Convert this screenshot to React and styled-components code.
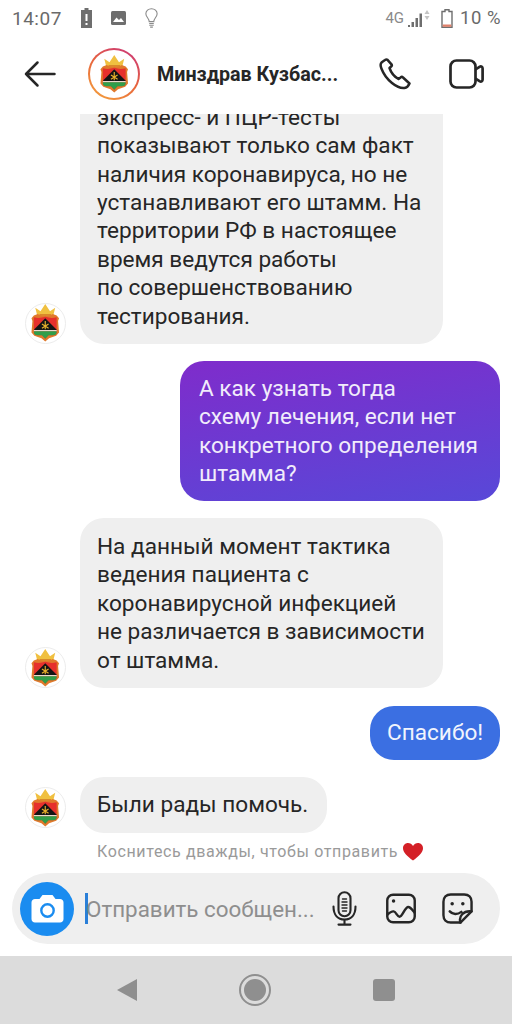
import React from 'react'
import styled, { createGlobalStyle } from 'styled-components'

const GlobalStyle = createGlobalStyle`
    html, body { margin: 0; padding: 0; background: #fff; }
    body { font-family: Roboto, "Noto Sans", sans-serif; }
`

function Crest({ height }) {
    return (
        <svg width={height * 0.75} height={height} viewBox="0 0 30 40">
            <path d="M7 14 L4.5 4 L10 7.5 L15 0 L20 7.5 L25.5 4 L23 14 Z" fill="#f0c040" />
            <path d="M9 10.5 H21 V12.5 H9 Z" fill="#d98a2a" />
            <path d="M3 12 L7 10.5 Q11 13 15 12 Q19 13 23 10.5 L27 12 L29.5 15 L28.5 18 L29.5 30 L26.5 33.5 L22 35 L19 36 L15 39.5 L11 36 L8 35 L3.5 33.5 L0.5 30 L1.5 18 L0.5 15 Z" fill="#e07a2c" />
            <path d="M3 14 Q9 15.5 15 13.5 Q21 15.5 27 14 L27 29.5 Q27 33 23 33 L18.5 33 L15 36.5 L11.5 33 L7 33 Q3 33 3 29.5 Z" fill="#e6302c" />
            <path d="M3.5 26.5 L15 15 L26.5 26.5 L26.5 27.5 L3.5 27.5 Z" fill="#141414" />
            <path d="M3 27.5 H27 V28.8 H3 Z" fill="#f4f4ea" />
            <path d="M3 28.8 H27 V29.5 Q27 33 23 33 L18.5 33 L15 36.5 L11.5 33 L7 33 Q3 33 3 29.5 Z" fill="#2f9e4a" />
            <path d="M15 18 V26.5 M11.5 21 L18.5 25.5 M18.5 21 L11.5 25.5" stroke="#e6b02c" strokeWidth="1.2" fill="none" />
        </svg>
    )
}

const Back = () => (
    <svg width="32" height="28" viewBox="0 0 32 28" fill="none" stroke="#262626" strokeWidth="2.5" strokeLinecap="round" strokeLinejoin="round">
        <path d="M2 14 H30.5 M13.5 2.5 L2 14 L13.5 25.5" />
    </svg>
)

const Phone = () => (
    <svg width="33" height="33" viewBox="0 0 33 33" fill="none" stroke="#262626" strokeWidth="2.5" strokeLinejoin="round">
        <path d="M6 2 L2.8 4.2 C1.2 5.6 1.4 8 2.4 10.5 C4.5 16 8 21 13 25 C17 28.2 22 30.5 25.5 30 C27.5 29.7 29.5 27.8 30.5 25.5 L24 19.5 C23.3 18.7 22.4 18.7 21.6 19.4 L19.5 21 C15 18.5 12 14.5 10.5 10 L12.4 8.3 C13 7.7 13 7 12.5 6.3 L8.5 1.8 C7.7 1.2 6.8 1.4 6 2 Z" />
    </svg>
)

const Video = () => (
    <svg width="35" height="30" viewBox="0 0 35 30" fill="none" stroke="#262626" strokeWidth="2.7" strokeLinejoin="round">
        <rect x="1.5" y="1.5" width="25" height="27" rx="6" />
        <path d="M26.5 10.5 L30.5 7.8 C32.2 6.8 33.6 7.7 33.6 9.5 V20.5 C33.6 22.3 32.2 23.2 30.5 22.2 L26.5 19.5" />
    </svg>
)

const Mic = () => (
    <svg width="25" height="35" viewBox="0 0 25 35" fill="none" stroke="#262626" strokeWidth="2.1" strokeLinecap="round">
        <rect x="6.5" y="1.2" width="12" height="24" rx="6" />
        <path d="M1.5 15.5 C1.5 24 6 28.5 12.5 28.5 C19 28.5 23.5 24 23.5 15.5 M12.5 28.5 V33 M6.5 33.6 H18.5" />
        <path d="M10.5 8 H14.5 M10 11 H15 M10 14 H15 M10 17 H15 M10.5 20 H14.5" strokeWidth="1.4" />
    </svg>
)

const Gallery = () => (
    <svg width="30" height="31" viewBox="0 0 31 31" fill="none" stroke="#262626" strokeWidth="2.5" strokeLinejoin="round">
        <rect x="1.3" y="1.3" width="28.4" height="28.4" rx="6" />
        <circle cx="7.8" cy="7.8" r="1.8" fill="#262626" stroke="none" />
        <path d="M1.3 22 C4 19.5 6 18 8 18.5 C10.5 19 11.5 24 14 24 C17 24 19.5 14 23 14 C25.5 14 27.5 17.5 29.7 20" />
    </svg>
)

const Sticker = () => (
    <svg width="31" height="31" viewBox="0 0 32 32" fill="none" stroke="#262626" strokeWidth="2.5" strokeLinejoin="round" strokeLinecap="round">
        <path d="M19 30.5 H9 C4.5 30.5 1.5 27.5 1.5 23 V9 C1.5 4.5 4.5 1.5 9 1.5 H23 C27.5 1.5 30.5 4.5 30.5 9 V19 Z" />
        <path d="M19 30.5 C17 24 22 18 30.5 19 M8 19 C11 22.5 16 22.5 20 19.5" />
        <circle cx="10.5" cy="11" r="1.8" fill="#262626" stroke="none" />
        <circle cx="21.5" cy="11" r="1.8" fill="#262626" stroke="none" />
    </svg>
)

const Camera = () => (
    <svg width="33" height="29" viewBox="0 0 33 29">
        <path d="M11.5 1 H21.5 L24.5 5 H29 C31 5 32.5 6.5 32.5 8.5 V25 C32.5 27 31 28.5 29 28.5 H4 C2 28.5 0.5 27 0.5 25 V8.5 C0.5 6.5 2 5 4 5 H8.5 Z" fill="#fff" />
        <circle cx="16.5" cy="16.5" r="6.2" fill="none" stroke="#1a8cf0" strokeWidth="2.4" />
    </svg>
)

const Alert = () => (
    <svg width="11" height="20" viewBox="0 0 11 20">
        <path d="M3.5 0 H7.5 V2 H11 V20 H0 V2 H3.5 Z" fill="#6e6e6e" />
        <path d="M4.5 6 H6.5 V13 H4.5 Z M4.5 15 H6.5 V17 H4.5 Z" fill="#fff" />
    </svg>
)

const Picture = () => (
    <svg width="15" height="14" viewBox="0 0 15 14">
        <rect width="15" height="14" rx="1.5" fill="#6e6e6e" />
        <path d="M2 11 L5.5 6.5 L8 9 L10 7 L13 11 Z" fill="#fff" />
    </svg>
)

const Bulb = () => (
    <svg width="13" height="20" viewBox="0 0 14 22" fill="none" stroke="#8a8a8a" strokeWidth="1.2">
        <path d="M4.5 15 C4.5 11.5 0.8 10 0.8 6.4 C0.8 3 3.6 0.8 7 0.8 C10.4 0.8 13.2 3 13.2 6.4 C13.2 10 9.5 11.5 9.5 15 Z" />
        <path d="M4.5 17 H9.5 M4.5 19 H9.5 M5.5 21 H8.5" />
    </svg>
)

const Signal = () => (
    <svg width="24" height="18" viewBox="0 0 24 18">
        <path d="M0 16 H2 V18 H0 Z M3.5 13 H6 V18 H3.5 Z M7.5 9 H10 V18 H7.5 Z M11.5 4.5 H14 V18 H11.5 Z" fill="#6e6e6e" />
        <path d="M19 1 L21.5 5 H16.5 Z M19 11 L16.5 7 H21.5 Z" fill="#c4c4c4" />
    </svg>
)

const BatteryIcon = () => (
    <svg width="12" height="19" viewBox="0 0 12 19">
        <path d="M4 0.7 H8 V2.5 H11 V18.3 H1 V2.5 H4 Z" fill="none" stroke="#6e6e6e" strokeWidth="1.4" />
        <rect x="1.7" y="15.5" width="8.6" height="2.3" fill="#e0806a" />
    </svg>
)

const Heart = () => (
    <svg width="20" height="18" viewBox="0 0 20 18">
        <path d="M10 17.5 C4 13 0 9.5 0 5.2 C0 2.2 2.3 0 5 0 C7 0 9 1 10 3 C11 1 13 0 15 0 C17.7 0 20 2.2 20 5.2 C20 9.5 16 13 10 17.5 Z" fill="#d42027" />
    </svg>
)

export default function App() {
    return (
        <Screen>
            <GlobalStyle />
            <StatusBar>
                <StatusGroup>
                    <Clock>14:07</Clock>
                    <Alert />
                    <Picture />
                    <Bulb />
                </StatusGroup>
                <StatusRight>
                    <Network>4G</Network>
                    <Signal />
                    <BatteryIcon />
                    <Percent>10 %</Percent>
                </StatusRight>
            </StatusBar>
            <Header>
                <BackSlot><Back /></BackSlot>
                <StoryRing>
                    <StoryInner><Crest height={38} /></StoryInner>
                </StoryRing>
                <Title>Минздрав Кузбас...</Title>
                <HeaderActions>
                    <Phone />
                    <Video />
                </HeaderActions>
            </Header>
            <Messages>
                <Row>
                    <Avatar><Crest height={38} /></Avatar>
                    <Bubble>
                        экспресс- и ПЦР-тесты<br />
                        показывают только сам факт<br />
                        наличия коронавируса, но не<br />
                        устанавливают его штамм. На<br />
                        территории РФ в настоящее<br />
                        время ведутся работы<br />
                        по совершенствованию<br />
                        тестирования.
                    </Bubble>
                </Row>
                <Row $mine>
                    <MineBubble>
                        А как узнать тогда<br />
                        схему лечения, если нет<br />
                        конкретного определения<br />
                        штамма?
                    </MineBubble>
                </Row>
                <Row $wide>
                    <Avatar><Crest height={38} /></Avatar>
                    <Bubble>
                        На данный момент тактика<br />
                        ведения пациента с<br />
                        коронавирусной инфекцией<br />
                        не различается в зависимости<br />
                        от штамма.
                    </Bubble>
                </Row>
                <Row $mine>
                    <ThanksBubble>Спасибо!</ThanksBubble>
                </Row>
                <Row $last>
                    <Avatar $lifted><Crest height={38} /></Avatar>
                    <ShortBubble>Были рады помочь.</ShortBubble>
                </Row>
                <Hint>
                    Коснитесь дважды, чтобы отправить
                    <Heart />
                </Hint>
            </Messages>
            <Composer>
                <CameraButton><Camera /></CameraButton>
                <Caret />
                <Placeholder>Отправить сообщен...</Placeholder>
                <ComposerActions>
                    <Mic />
                    <Gallery />
                    <Sticker />
                </ComposerActions>
            </Composer>
            <NavBar>
                <NavBack />
                <NavHome><NavDot /></NavHome>
                <NavSquare />
            </NavBar>
        </Screen>
    )
}

const Screen = styled.div`
    width: 512px;
    height: 1024px;
    display: flex;
    flex-direction: column;
    overflow: hidden;
    background: #fff;
`
const StatusBar = styled.div`
    height: 36px;
    flex-shrink: 0;
    display: flex;
    align-items: center;
    justify-content: space-between;
    padding: 0 11px 0 12px;
`
const StatusGroup = styled.div`
    display: flex;
    align-items: center;
    gap: 19px;
`
const StatusRight = styled.div`
    display: flex;
    align-items: center;
    gap: 6px;

    svg + svg {
        margin-left: 3px;
    }
`
const Clock = styled.span`
    font-size: 19px;
    letter-spacing: 0.5px;
    color: #6a6a6a;
`
const Network = styled.span`
    font-size: 15px;
    color: #8a8a8a;
    margin-right: -2px;
`
const Percent = styled.span`
    font-size: 18.5px;
    letter-spacing: 0.5px;
    color: #6a6a6a;
    margin-left: 1px;
`
const Header = styled.div`
    height: 78px;
    flex-shrink: 0;
    box-sizing: border-box;
    padding: 0 28px 2px 24px;
    display: flex;
    align-items: center;
`
const BackSlot = styled.div`
    display: flex;
    width: 64px;
`
const StoryRing = styled.div`
    width: 52px;
    height: 52px;
    border-radius: 50%;
    padding: 2px;
    box-sizing: border-box;
    background: linear-gradient(30deg, #f5a63c, #e8663c 50%, #c8307e);
    display: flex;
`
const StoryInner = styled.div`
    flex: 1;
    border-radius: 50%;
    background: #fff;
    display: flex;
    align-items: center;
    justify-content: center;
`
const Title = styled.div`
    margin-left: 17px;
    flex: 1;
    font-size: 19.7px;
    font-weight: 700;
    color: #262626;
    white-space: nowrap;
`
const HeaderActions = styled.div`
    display: flex;
    align-items: center;
    gap: 37px;
`
const Messages = styled.div`
    flex: 1;
    min-height: 0;
    overflow: hidden;
    display: flex;
    flex-direction: column;
    justify-content: flex-end;
    padding: 0 12px 0 25px;
`
const Row = styled.div`
    flex-shrink: 0;
    display: flex;
    align-items: flex-end;
    justify-content: ${props => (props.$mine ? 'flex-end' : 'flex-start')};
    margin-bottom: ${props => (props.$last ? '9px' : props.$wide ? '18px' : '17px')};
`
const Avatar = styled.div`
    width: 41px;
    height: 41px;
    margin-right: 14px;
    margin-bottom: ${props => (props.$lifted ? '5px' : '0')};
    border-radius: 50%;
    background: #fff;
    border: 1px solid #ececec;
    box-sizing: border-box;
    display: flex;
    align-items: center;
    justify-content: center;
`
const Bubble = styled.div`
    width: 363px;
    box-sizing: border-box;
    padding: 15px 17px 13px;
    border-radius: 24px;
    background: #efefef;
    color: #262626;
    font-size: 22.6px;
    line-height: 28.4px;
    white-space: nowrap;
`
const MineBubble = styled(Bubble)`
    width: 320px;
    height: 140px;
    padding: 14px 19px 12px;
    color: #f1ecfb;
    background: linear-gradient(170deg, #7f2ccb, #5848d8);
`
const ThanksBubble = styled(Bubble)`
    width: 130px;
    height: 54px;
    padding: 13px 17px;
    color: #f1f4fd;
    background: #3b6fe2;
`
const ShortBubble = styled(Bubble)`
    width: 247px;
    height: 56px;
    padding: 14px 17px;
`
const Hint = styled.div`
    height: 20px;
    display: flex;
    align-items: center;
    gap: 5px;
    margin: 0 0 12px 72px;
    font-size: 16px;
    letter-spacing: 0.63px;
    color: #9a9a9a;
    white-space: nowrap;
`
const Composer = styled.div`
    height: 71px;
    flex-shrink: 0;
    box-sizing: border-box;
    margin: 0 12px 12px;
    padding: 0 27px 0 8px;
    border-radius: 36px;
    background: #efefef;
    display: flex;
    align-items: center;
`
const CameraButton = styled.div`
    width: 54px;
    height: 54px;
    flex-shrink: 0;
    border-radius: 50%;
    background: #1a8cf0;
    display: flex;
    align-items: center;
    justify-content: center;
`
const Caret = styled.div`
    width: 3px;
    height: 31px;
    margin-left: 11px;
    background: #2a7fd8;
    flex-shrink: 0;
`
const Placeholder = styled.div`
    flex: 1;
    margin-left: -2px;
    font-size: 22.4px;
    color: #8e8e8e;
    white-space: nowrap;
`
const ComposerActions = styled.div`
    display: flex;
    align-items: center;
    gap: 26px;

    svg:first-child {
        margin-right: 3px;
    }
`
const NavBar = styled.div`
    height: 68px;
    flex-shrink: 0;
    background: #dcdcdc;
    display: flex;
    align-items: center;
    justify-content: space-between;
    padding: 0 117px;
`
const NavBack = styled.div`
    width: 0;
    height: 0;
    border-top: 11px solid transparent;
    border-bottom: 11px solid transparent;
    border-right: 20px solid #8f8f8f;
`
const NavHome = styled.div`
    width: 32px;
    height: 32px;
    box-sizing: border-box;
    border-radius: 50%;
    border: 2px solid #8f8f8f;
    display: flex;
    align-items: center;
    justify-content: center;
`
const NavDot = styled.div`
    width: 22px;
    height: 22px;
    border-radius: 50%;
    background: #8f8f8f;
`
const NavSquare = styled.div`
    width: 22px;
    height: 22px;
    border-radius: 3px;
    background: #8f8f8f;
`
